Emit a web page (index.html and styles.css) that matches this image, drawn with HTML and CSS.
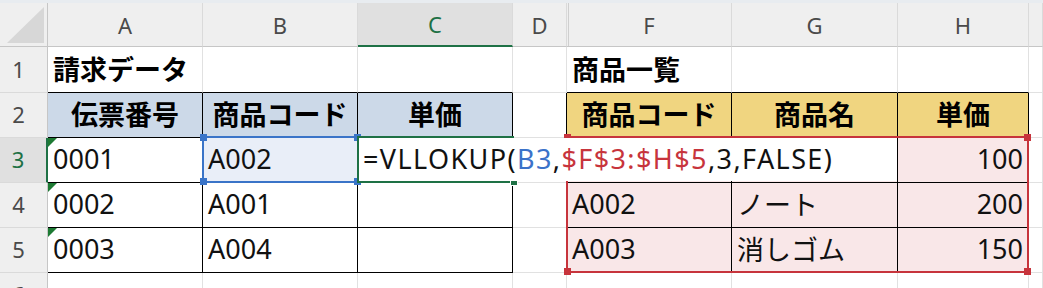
FILE: index.html
```html
<!DOCTYPE html>
<html lang="ja">
<head>
<meta charset="utf-8">
<title>VLOOKUP</title>
<link rel="stylesheet" href="styles.css">
</head>
<body>
<div class="strip"></div>
<div class="sheet">
  <div class="corner"><svg width="48" height="44" viewBox="0 0 48 44"><polygon points="7,40 44,4 44,40" fill="#d7d7d7"/></svg></div>
  <div class="ch">A</div>
  <div class="ch">B</div>
  <div class="ch sel">C</div>
  <div class="ch">D</div>
  <div class="ch hid">F</div>
  <div class="ch">G</div>
  <div class="ch">H</div>
  <div class="ch"></div>

  <div class="rh">1</div>
  <div class="c kb bold">請求データ</div>
  <div class="c kb"></div>
  <div class="c kb"></div>
  <div class="c"></div>
  <div class="c kb bold">商品一覧</div>
  <div class="c kb"></div>
  <div class="c kb"></div>
  <div class="c"></div>

  <div class="rh">2</div>
  <div class="c kr kb bold ctr blue">伝票番号</div>
  <div class="c kr kb bold ctr blue">商品コード</div>
  <div class="c kr kb bold ctr blue">単価</div>
  <div class="c kr"></div>
  <div class="c kr kb bold ctr gold">商品コード</div>
  <div class="c kr kb bold ctr gold">商品名</div>
  <div class="c kr kb bold ctr gold">単価</div>
  <div class="c"></div>

  <div class="rh rsel">3</div>
  <div class="c kr kb err">0001</div>
  <div class="c kr kb bsel">A002</div>
  <div class="c kr kb"></div>
  <div class="c kr"></div>
  <div class="c kr kb pink"></div>
  <div class="c kr kb pink"></div>
  <div class="c kr kb pink num">100</div>
  <div class="c"></div>

  <div class="rh">4</div>
  <div class="c kr kb err">0002</div>
  <div class="c kr kb">A001</div>
  <div class="c kr kb"></div>
  <div class="c kr"></div>
  <div class="c kr kb pink">A002</div>
  <div class="c kr kb pink">ノート</div>
  <div class="c kr kb pink num">200</div>
  <div class="c"></div>

  <div class="rh">5</div>
  <div class="c kr kb err">0003</div>
  <div class="c kr kb">A004</div>
  <div class="c kr kb"></div>
  <div class="c kr"></div>
  <div class="c kr kb pink">A003</div>
  <div class="c kr kb pink">消しゴム</div>
  <div class="c kr kb pink num">150</div>
  <div class="c"></div>

  <div class="rh">6</div>
  <div class="c"></div>
  <div class="c"></div>
  <div class="c"></div>
  <div class="c"></div>
  <div class="c"></div>
  <div class="c"></div>
  <div class="c"></div>
  <div class="c"></div>

  <div class="range-red">
    <span class="h red tl"></span><span class="h red tr"></span><span class="h red bl"></span><span class="h red br"></span>
  </div>
  <div class="range-blue">
    <span class="h blu tl"></span><span class="h blu tr"></span><span class="h blu bl"></span><span class="h blu br"></span>
  </div>
  <div class="active"><span class="fill"></span></div>
  <div class="edit">=VLLOKUP(<span class="rb">B3</span>,<span class="rr">$F$3:$H$5</span>,3,FALSE)</div>
</div>
</body>
</html>
```

FILE: styles.css
```css
html, body {
  margin: 0;
  padding: 0;
  background: #ffffff;
  overflow: hidden;
}

.strip {
  height: 3px;
  background: #e8ecf0;
}

.sheet {
  position: relative;
  display: grid;
  grid-template-columns: 48px 155px 155px 155px 54px 165px 166px 131px 1fr;
  grid-template-rows: 44px 46px 45px 45px 45px 45px 45px;
  font-family: "Noto Sans", "Noto Sans CJK JP", sans-serif;
}

.corner {
  background: #efefef;
  border-right: 1px solid #c6c6c6;
  border-bottom: 1px solid #c6c6c6;
  box-sizing: border-box;
  overflow: hidden;
}
.corner svg { display: block; }

.ch {
  box-sizing: border-box;
  background: #efefef;
  border-right: 1px solid #dadada;
  border-bottom: 1px solid #c6c6c6;
  display: flex;
  align-items: center;
  justify-content: center;
  font-size: 22px;
  color: #4a4a4a;
}
.ch.sel {
  background: #e0e0e0;
  color: #1e7145;
  border-bottom: 2px solid #1e7145;
}
.ch.hid {
  background: linear-gradient(to right, #efefef 0 1px, #cfcfcf 1px 2px, #efefef 2px);
}

.rh {
  box-sizing: border-box;
  background: #efefef;
  border-right: 1px solid #c6c6c6;
  border-bottom: 1px solid #dadada;
  display: flex;
  align-items: center;
  justify-content: center;
  padding: 0 10px 2px 0;
  font-size: 22px;
  color: #4a4a4a;
}
.rh.rsel {
  background: #e0e0e0;
  color: #1e7145;
  border-right: 2px solid #1e7145;
}

.c {
  box-sizing: border-box;
  border-right: 1px solid #e1e1e1;
  border-bottom: 1px solid #e1e1e1;
  display: flex;
  align-items: center;
  padding: 0 5px 3px;
  font-size: 27px;
  color: #111;
  white-space: nowrap;
  position: relative;
}
.c.kr { border-right-color: #000; }
.c.kb { border-bottom-color: #000; }
.c.bold { font-weight: 700; color: #000; }
.c.ctr { justify-content: center; padding-left: 0; padding-right: 0; }
.c.num { justify-content: flex-end; }
.c.blue { background: #ccd9e8; }
.c.gold { background: #f0d580; }
.c.pink { background: #f9e7e8; }
.c.bsel { background: #e9eef8; }

.c.err::before {
  content: "";
  position: absolute;
  left: 0;
  top: 0;
  border-top: 9px solid #1d7a33;
  border-right: 9px solid transparent;
}

.range-red {
  position: absolute;
  left: 566px;
  top: 133px;
  width: 463px;
  height: 137px;
  box-sizing: border-box;
  border: 2px solid #c7343c;
}
.range-blue {
  position: absolute;
  left: 202px;
  top: 133px;
  width: 157px;
  height: 47px;
  box-sizing: border-box;
  border: 2px solid #3a74c8;
}
.h {
  position: absolute;
  width: 7px;
  height: 7px;
}
.h.red { background: #c7343c; }
.h.blu { background: #3a74c8; }
.h.tl { left: -4px; top: -4px; }
.h.tr { right: -4px; top: -4px; }
.h.bl { left: -4px; bottom: -4px; }
.h.br { right: -4px; bottom: -4px; }

.active {
  position: absolute;
  left: 357px;
  top: 133px;
  width: 157px;
  height: 47px;
  box-sizing: border-box;
  border: 2px solid #1e7145;
  border-right: none;
}
.active .fill {
  position: absolute;
  right: -3px;
  bottom: -4px;
  width: 6px;
  height: 6px;
  background: #1e7145;
  outline: 1px solid #ffffff;
}

.edit {
  position: absolute;
  left: 359px;
  top: 135px;
  width: 538px;
  height: 43px;
  box-sizing: border-box;
  background: #ffffff;
  padding: 0 0 3px 4px;
  display: flex;
  align-items: center;
  font-size: 27px;
  letter-spacing: 1.4px;
  color: #111;
  white-space: nowrap;
}
.edit .rb { color: #3b72c9; }
.edit .rr { color: #c7343c; }
```
